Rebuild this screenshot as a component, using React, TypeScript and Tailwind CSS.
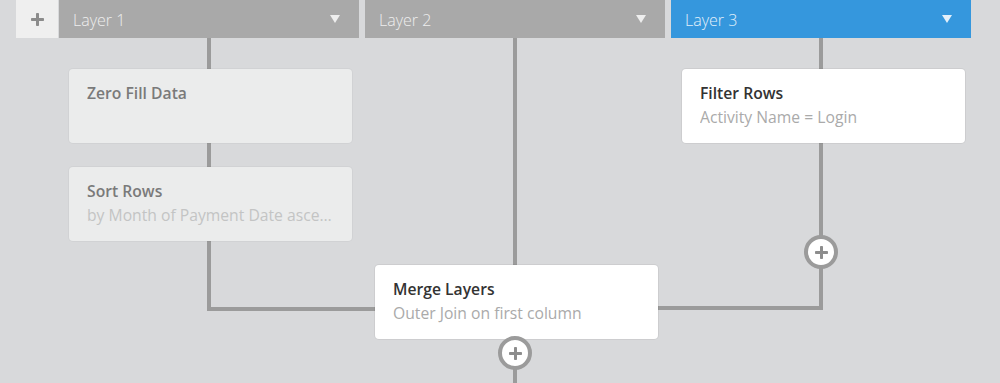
import React from "react";

const LINE = "#9b9b9b";

function Triangle() {
  return (
    <svg width="10" height="8" viewBox="0 0 10 8" className="shrink-0">
      <polygon points="0,0 10,0 5,8" fill="currentColor" />
    </svg>
  );
}

function Tab({ label, active }: { label: string; active?: boolean }) {
  return (
    <div
      className={
        active
          ? "w-[300px] h-[38px] bg-[#3597dd] text-[#e3f0fa] flex items-center justify-between pl-[14px] pr-[19px]"
          : "w-[300px] h-[38px] bg-[#a9a9a9] text-[#eeeeee] flex items-center justify-between pl-[14px] pr-[19px]"
      }
    >
      <span className="text-[16px] leading-none pt-[2px] font-light">{label}</span>
      <Triangle />
    </div>
  );
}

function PlusGlyph({ size = 14, stroke = 3, color = "#8d8d8d" }: { size?: number; stroke?: number; color?: string }) {
  const o = (size - stroke) / 2;
  return (
    <svg width={size} height={size} viewBox={`0 0 ${size} ${size}`}>
      <rect x={0} y={o} width={size} height={stroke} rx={0.8} fill={color} />
      <rect x={o} y={0} width={stroke} height={size} rx={0.8} fill={color} />
    </svg>
  );
}

function AddCircle({ className }: { className: string }) {
  return (
    <div
      className={
        "relative w-[34px] h-[34px] rounded-full border-[4px] border-[#9b9b9b] bg-white flex items-center justify-center " +
        className
      }
    >
      <PlusGlyph size={13} stroke={3} />
    </div>
  );
}

function Card({
  title,
  subtitle,
  faded,
  className,
}: {
  title: string;
  subtitle?: string;
  faded?: boolean;
  className?: string;
}) {
  return (
    <div
      className={
        (faded
          ? "bg-[#ebecec] shadow-[0_0_0_1px_rgba(0,0,0,0.03)] "
          : "bg-white shadow-[0_0_0_1px_rgba(0,0,0,0.05)] ") +
        "relative w-[283px] h-[74px] rounded-[4px] pl-[18px] pr-[19px] pt-[12px] " +
        (className ?? "")
      }
    >
      <div
        className={
          (faded ? "text-[#7a7a7a]" : "text-[#333333]") +
          " text-[15.7px] leading-[24px] font-semibold truncate"
        }
      >
        {title}
      </div>
      {subtitle && (
        <div
          className={
            (faded ? "text-[#c3c4c4]" : "text-[#aaaaaa]") +
            " text-[15.7px] leading-[24px] truncate"
          }
        >
          {subtitle}
        </div>
      )}
    </div>
  );
}

export default function App() {
  return (
    <div className="relative w-[1000px] h-[383px] overflow-hidden bg-[#d8d9db] font-['Open_Sans',sans-serif]">
      {/* connector drawing */}
      <svg className="absolute inset-0" width="1000" height="383">
        <rect x="207" y="38" width="4" height="273" fill={LINE} />
        <rect x="207" y="307" width="170" height="4" fill={LINE} />
        <rect x="513" y="38" width="4" height="230" fill={LINE} />
        <rect x="513" y="340" width="4" height="43" fill={LINE} />
        <rect x="819" y="38" width="4" height="272" fill={LINE} />
        <rect x="656" y="306" width="167" height="4" fill={LINE} />
      </svg>

      {/* header */}
      <div className="relative flex pl-[16px]">
        <div className="w-[42px] h-[38px] bg-[#efefef] flex items-center justify-center mr-px">
          <PlusGlyph size={13} stroke={3} color="#8b8b8b" />
        </div>
        <div className="flex gap-[6px]">
          <Tab label="Layer 1" />
          <Tab label="Layer 2" />
          <Tab label="Layer 3" active />
        </div>
      </div>

      {/* columns */}
      <div className="relative flex gap-[6px] pl-[59px]">
        <div className="w-[300px] flex flex-col pt-[31px]">
          <Card className="ml-[10px]" title="Zero Fill Data" faded />
          <Card
            className="ml-[10px] mt-[24px]"
            title="Sort Rows"
            subtitle="by Month of Payment Date ascending"
            faded
          />
        </div>
        <div className="w-[300px] flex flex-col items-start pt-[227px]">
          <Card className="ml-[10px]" title="Merge Layers" subtitle="Outer Join on first column" />
          <AddCircle className="ml-[133px] mt-[-3px]" />
        </div>
        <div className="w-[300px] flex flex-col items-start pt-[31px]">
          <Card className="ml-[11px]" title="Filter Rows" subtitle="Activity Name = Login" />
          <AddCircle className="ml-[133px] mt-[92px]" />
        </div>
      </div>
    </div>
  );
}
